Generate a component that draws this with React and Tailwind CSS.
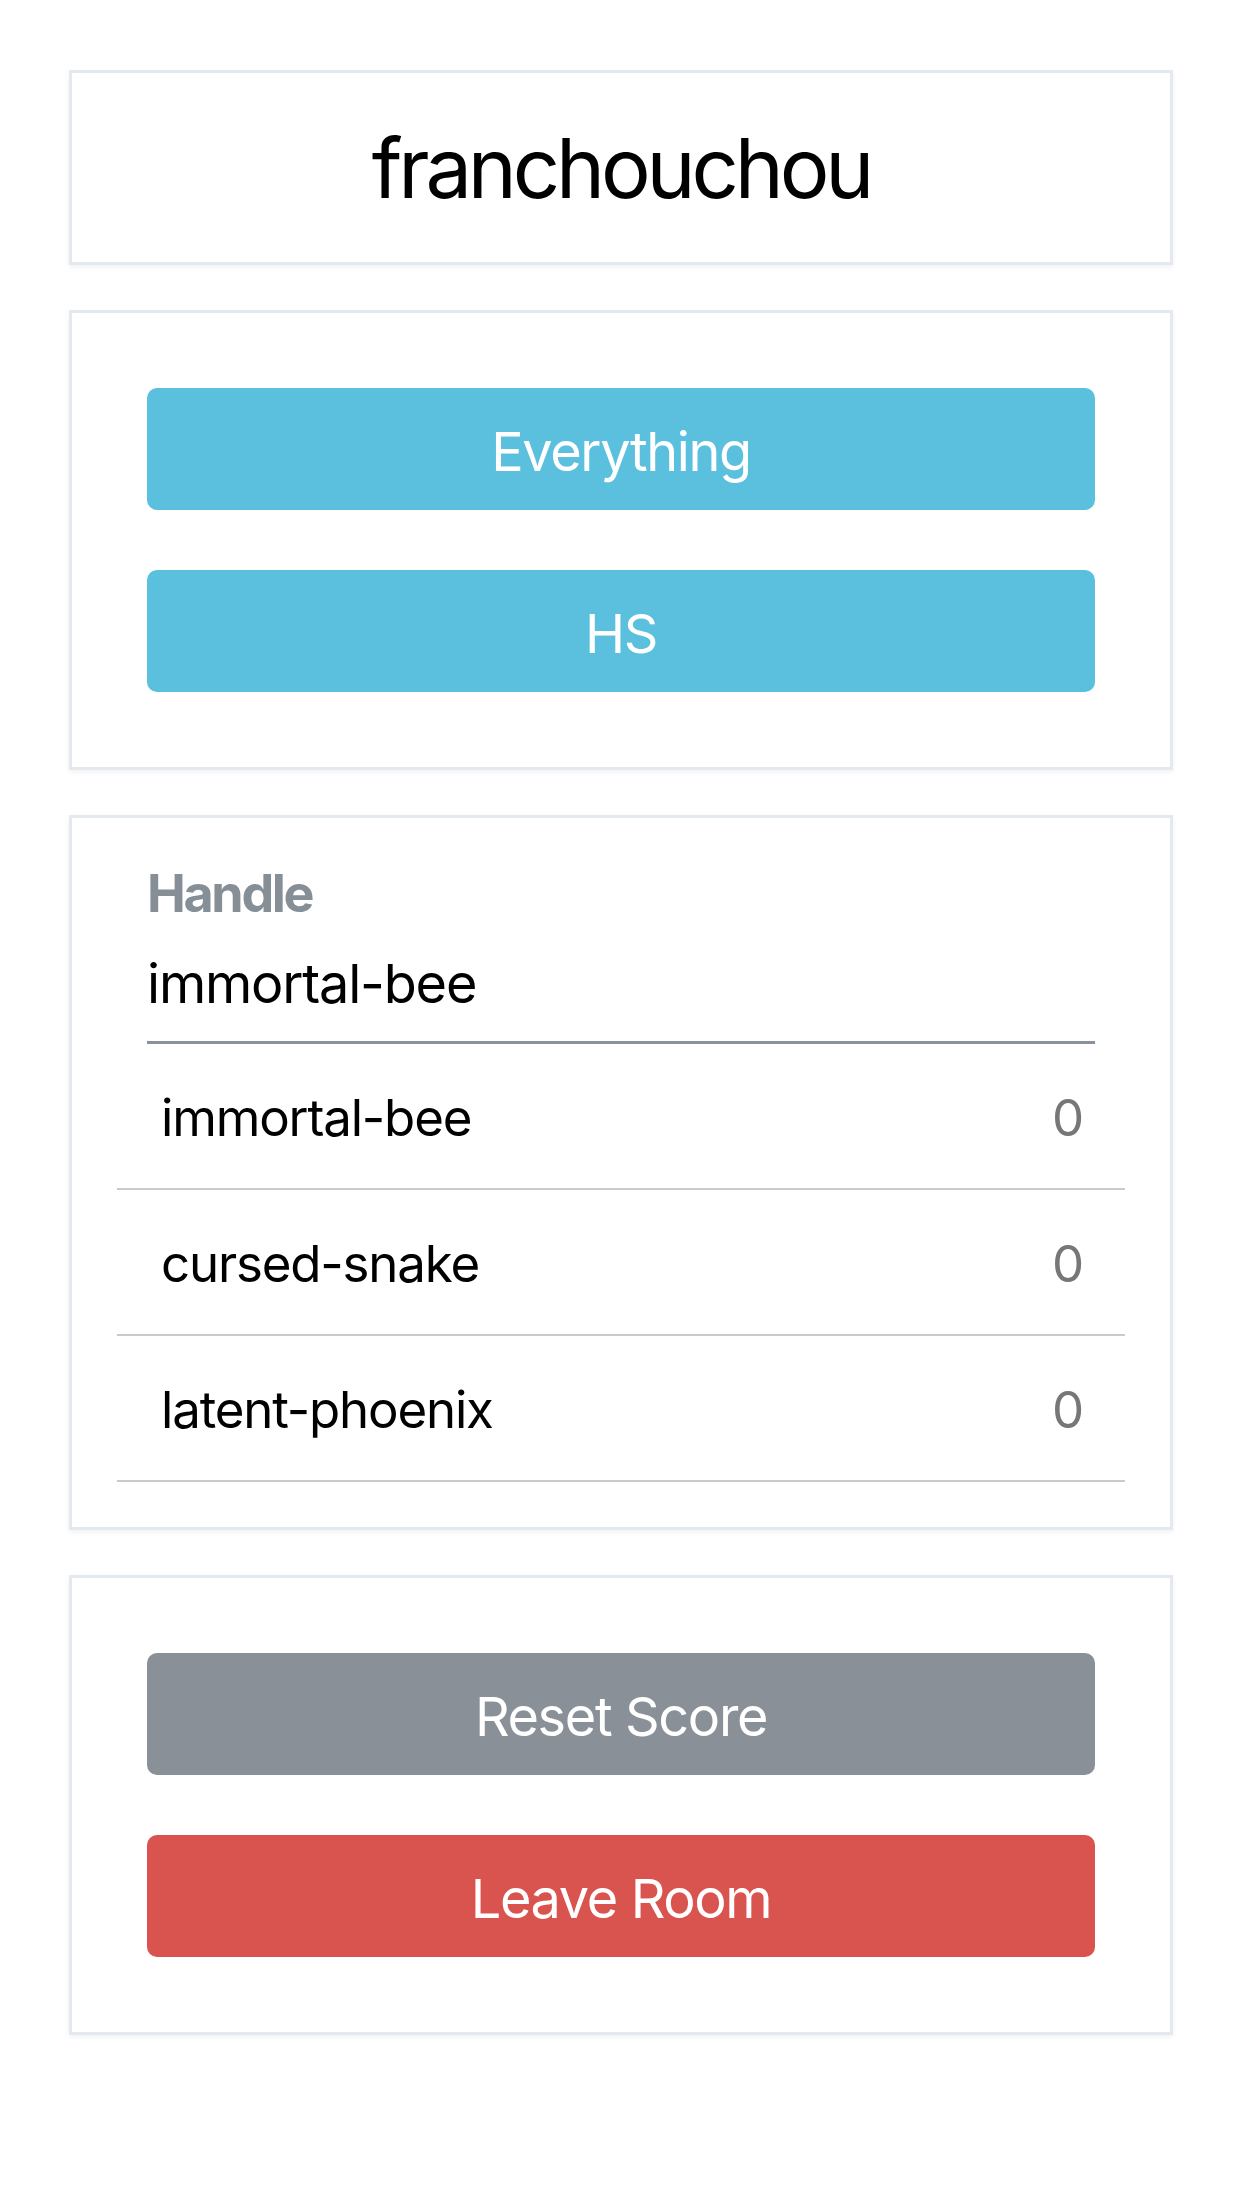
import { useState } from "react";

const players = [
  { name: "immortal-bee", score: 0 },
  { name: "cursed-snake", score: 0 },
  { name: "latent-phoenix", score: 0 },
];

function Card({ className = "", children }) {
  return (
    <div
      className={`bg-white border-[3px] border-[#e4e9ef] shadow-[0_2px_5px_rgba(0,0,0,0.06)] ${className}`}
    >
      {children}
    </div>
  );
}

function Btn({ color, children }) {
  return (
    <button
      className={`w-full h-[122px] pt-[6px] rounded-[10px] text-white text-[54px] leading-none tracking-[-0.025em] ${color}`}
    >
      {children}
    </button>
  );
}

export default function App() {
  const [handle, setHandle] = useState("immortal-bee");

  return (
    <div className="min-h-[2208px] bg-white px-[69px] pt-[70px] font-['Inter','Noto_Sans',sans-serif] text-black">
      <div className="flex flex-col gap-[45px]">
        <Card className="h-[195px] flex items-center justify-center">
          <h1 className="text-[83px] leading-[1.2] font-normal tracking-[-0.05em] pt-[2px]">
            franchouchou
          </h1>
        </Card>

        <Card className="p-[75px] flex flex-col gap-[60px]">
          <Btn color="bg-[#5bc0de]">Everything</Btn>
          <Btn color="bg-[#5bc0de]">HS</Btn>
        </Card>

        <Card className="px-[45px] pt-[45px] pb-[45px]">
          <div className="px-[30px]">
            <label className="block text-[52px] leading-[62px] font-bold tracking-[-0.045em] text-[#868e96]">
              Handle
            </label>
            <input
              value={handle}
              onChange={(e) => setHandle(e.target.value)}
              className="block w-full mt-[24px] h-[95px] pt-[3px] pb-[27px] text-[54px] leading-[65px] tracking-[-0.022em] border-b-[3px] border-[#89919a] outline-none bg-transparent"
            />
          </div>
          <ul>
            {players.map((p) => (
              <li
                key={p.name}
                className="h-[146px] pl-[44px] pr-[42px] pt-[4px] flex items-center justify-between border-b-2 border-[#cacaca] text-[51px] tracking-[-0.023em]"
              >
                <span>{p.name}</span>
                <span className="text-[#777777]">{p.score}</span>
              </li>
            ))}
          </ul>
        </Card>

        <Card className="p-[75px] flex flex-col gap-[60px]">
          <Btn color="bg-[#899097]">Reset Score</Btn>
          <Btn color="bg-[#d9534f]">Leave Room</Btn>
        </Card>
      </div>
    </div>
  );
}
